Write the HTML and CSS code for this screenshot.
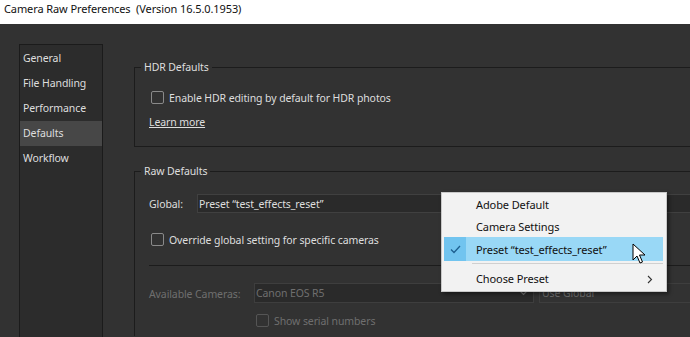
FILE: index.html
```html
<!DOCTYPE html>
<html lang="en">
<head>
  <meta charset="UTF-8" />
  <title>Camera Raw Preferences</title>
  <link rel="stylesheet" href="styles.css">
</head>
<body>
  <div class="titlebar">Camera Raw Preferences&nbsp; (Version 16.5.0.1953)</div>

  <div class="window">
    <ul class="sidebar">
      <li>General</li>
      <li>File Handling</li>
      <li>Performance</li>
      <li class="active">Defaults</li>
      <li>Workflow</li>
    </ul>

    <div class="content">
      <fieldset class="group hdr">
        <legend>HDR Defaults</legend>
        <label class="check-row">
          <span class="box"></span>
          <span>Enable HDR editing by default for HDR photos</span>
        </label>
        <a class="link" href="#">Learn more</a>
      </fieldset>

      <fieldset class="group raw">
        <legend>Raw Defaults</legend>
        <div class="field-row global">
          <span class="field-label">Global:</span>
          <div class="select wide">Preset “test_effects_reset”</div>
        </div>
        <label class="check-row override">
          <span class="box"></span>
          <span>Override global setting for specific cameras</span>
        </label>
        <div class="divider"></div>
        <div class="field-row cameras disabled">
          <span class="field-label">Available Cameras:</span>
          <div class="select camera">
            <span>Canon EOS R5</span>
            <svg class="chev" width="9" height="6" viewBox="0 0 9 6"><path d="M1 1l3.5 3.5L8 1" fill="none" stroke="currentColor" stroke-width="1.2"/></svg>
          </div>
          <div class="select useglobal">Use Global</div>
        </div>
        <label class="check-row serial disabled">
          <span class="box"></span>
          <span>Show serial numbers</span>
        </label>
      </fieldset>
    </div>
  </div>

  <!-- menu du dropdown Global, ouvert -->
  <div class="menu">
    <div class="menu-item">Adobe Default</div>
    <div class="menu-item">Camera Settings</div>
    <div class="menu-item selected">
      <span class="tick">
        <svg width="11" height="9" viewBox="0 0 11 9"><path d="M1 4.5l3 3L10 1" fill="none" stroke="#1d5f8f" stroke-width="1.3"/></svg>
      </span>
      Preset “test_effects_reset”
    </div>
    <div class="menu-sep"></div>
    <div class="menu-item sub">
      Choose Preset
      <svg class="arrow" width="6" height="9" viewBox="0 0 6 9"><path d="M1 1l3.5 3.5L1 8" fill="none" stroke="#333" stroke-width="1.1"/></svg>
    </div>
  </div>

  <svg class="cursor" width="14" height="22" viewBox="0 0 14 22">
    <path d="M1 1v16l4-4 3 7 2.5-1-3-7h5.5z" fill="#fff" stroke="#000" stroke-width="1" stroke-linejoin="round"/>
  </svg>
</body>
</html>
```

FILE: styles.css
```css
html, body {
  margin: 0;
  padding: 0;
  height: 100%;
  overflow: hidden;
}

body {
  font-family: "Noto Sans", "Open Sans", Arial, sans-serif;
  font-size: 10.5px;
  letter-spacing: -0.1px;
  background: #323232;
  color: #dedede;
  position: relative;
}

.titlebar {
  height: 24px;
  line-height: 18px;
  padding-left: 4px;
  background: #fff;
  color: #111;
  font-size: 11px;
}

.window {
  display: flex;
  align-items: flex-start;
  padding: 20px 0 0 19px;
  height: 293px;
  overflow: hidden;
}

.sidebar {
  list-style: none;
  margin: 0;
  padding: 1px 0 0;
  width: 82px;
  height: 292px;
  background: #2c2c2c;
  border: 1px solid #1b1b1b;
  border-bottom: 0;
  flex-shrink: 0;
}

.sidebar li {
  height: 25px;
  line-height: 25px;
  padding-left: 3px;
}

.sidebar li.active {
  background: #474747;
}

.content {
  margin-left: 31px;
  padding-top: 15px;
  width: 545px;
  flex-shrink: 0;
}

.group {
  margin: 0 -20px 0 0;
  border: 1px solid #1c1c1c;
  padding: 0 14px;
}

.group legend {
  height: 16px;
  line-height: 17px;
  padding: 0 3px;
  margin-left: -8px;
}

.hdr {
  padding-bottom: 16px;
}

.raw {
  margin-top: 16px;
  height: 172px;
  border-bottom: 0;
}

.check-row {
  display: flex;
  align-items: center;
  gap: 5px;
  height: 18px;
  padding-left: 2px;
}

.check-row span + span {
  padding-top: 1px;
}

.hdr .check-row {
  margin-top: 13px;
}

.box {
  width: 11px;
  height: 11px;
  border: 1px solid #8a8a8a;
  border-radius: 2px;
  flex-shrink: 0;
}

.link {
  display: block;
  margin-top: 8px;
  height: 16px;
  line-height: 17px;
  color: #dedede;
}

.field-row {
  display: flex;
  align-items: center;
}

.field-label {
  flex-shrink: 0;
  padding-top: 1px;
}

.global {
  margin-top: 15px;
}

.global .field-label {
  width: 48px;
}

.select {
  height: 17px;
  line-height: 19px;
  background: #2a2a2a;
  border: 1px solid #474747;
  padding-left: 1px;
  box-sizing: content-box;
}

.select.wide {
  width: 500px;
  border-color: #404040;
}

.override {
  margin-top: 17px;
}

.divider {
  height: 1px;
  background: #1c1c1c;
  margin-top: 17px;
  margin-right: -20px;
}

.cameras {
  margin-top: 17px;
}

.cameras .field-label {
  width: 105px;
}

.disabled {
  color: #6f6f6f;
}

.disabled .box {
  border-color: #555;
}

.select.camera {
  width: 275px;
  display: flex;
  align-items: center;
  justify-content: space-between;
  padding-right: 2px;
  border-color: #3e3e3e;
  height: 18px;
  flex-shrink: 0;
}

.chev {
  color: #6f6f6f;
  margin-right: 3px;
}

.select.useglobal {
  margin-left: 5px;
  width: 180px;
  flex-shrink: 0;
  border-color: #3e3e3e;
  height: 18px;
  padding-left: 2px;
  background: transparent;
}

.serial {
  margin-top: 8px;
  margin-left: 105px;
}

/* menu déroulant par-dessus */
.menu {
  position: absolute;
  left: 441px;
  top: 192px;
  width: 222px;
  padding: 0 0 2px 2px;
  background: #f2f2f2;
  border: 1px solid #c8c8c8;
  box-shadow: 2px 2px 4px rgba(0, 0, 0, 0.45);
  color: #111;
  font-size: 11px;
}

.menu-item {
  position: relative;
  height: 22px;
  line-height: 24px;
  padding-left: 32px;
  margin-right: 3px;
}

.menu-item.selected {
  height: 24px;
  line-height: 25px;
  background: #99d8f6;
}

.tick {
  position: absolute;
  left: 0;
  top: 0;
  width: 22px;
  height: 24px;
  background: #71c4ef;
  display: flex;
  align-items: center;
  justify-content: center;
}

.menu-sep {
  height: 1px;
  background: #d0d0d0;
  margin: 2px 3px 3px 28px;
}

.arrow {
  position: absolute;
  right: 10px;
  top: 8px;
}

.cursor {
  position: absolute;
  left: 632px;
  top: 243px;
}
```
